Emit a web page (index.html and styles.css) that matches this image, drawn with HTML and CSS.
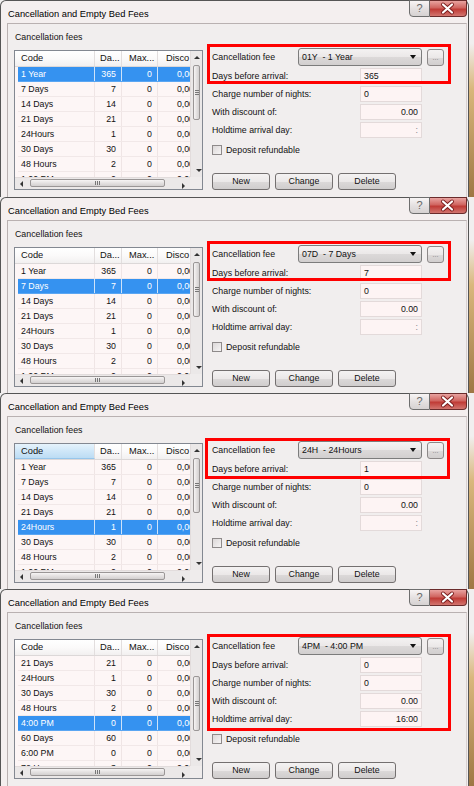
FILE: index.html
```html
<!DOCTYPE html>
<html lang="en">
<head>
  <meta charset="UTF-8">
  <title>Cancellation and Empty Bed Fees</title>
  <link rel="stylesheet" href="styles.css">
</head>
<body>
<div class="shot">

  <!-- 1 Year -->
  <section class="win">
    <div class="frame">
      <div class="titlebar">
        <div class="title">Cancellation and Empty Bed Fees</div>
        <div class="caption">
          <div class="help">?</div>
          <div class="close"><svg width="37" height="17" viewBox="0 0 37 17"><path d="M14 4.5 L23 12.5 M23 4.5 L14 12.5" stroke="#7a1d1d" stroke-width="4" stroke-linecap="round"/><path d="M14 4.5 L23 12.5 M23 4.5 L14 12.5" stroke="#fff" stroke-width="2.2" stroke-linecap="round"/></svg></div>
        </div>
      </div>
      <div class="client">
        <div class="fees">
          <div class="fees-label">Cancellation fees</div>
          <div class="list">
            <div class="view">
              <div class="lv-head"><div>Code</div><div>Da...</div><div>Max...</div><div>Disco</div></div>
              <div class="lv-row sel"><div>1 Year</div><div>365</div><div>0</div><div>0,00</div></div>
              <div class="lv-row"><div>7 Days</div><div>7</div><div>0</div><div>0,00</div></div>
              <div class="lv-row"><div>14 Days</div><div>14</div><div>0</div><div>0,00</div></div>
              <div class="lv-row"><div>21 Days</div><div>21</div><div>0</div><div>0,00</div></div>
              <div class="lv-row"><div>24Hours</div><div>1</div><div>0</div><div>0,00</div></div>
              <div class="lv-row"><div>30 Days</div><div>30</div><div>0</div><div>0,00</div></div>
              <div class="lv-row"><div>48 Hours</div><div>2</div><div>0</div><div>0,00</div></div>
              <div class="lv-row"><div>1:00 PM</div><div>0</div><div>0</div><div>0,00</div></div>
            </div>
            <div class="vs"><div class="sb-btn"><span class="tri up"></span></div><div class="thumb"></div><div class="sb-btn end"><span class="tri down"></span></div></div>
            <div class="hs"><div class="sb-btn"><span class="tri left"></span></div><div class="hthumb"></div><div class="sb-btn end"><span class="tri right"></span></div></div>
            <div class="corner"></div>
          </div>
        </div>
        <div class="form">
          <div class="mark">
            <div class="row combo-row"><label>Cancellation fee</label><div class="combo"><span>01Y  - 1 Year</span><span class="tri down"></span></div><div class="dots">...</div></div>
            <div class="row"><label>Days before arrival:</label><div class="field">365</div></div>
          </div>
          <div class="row"><label>Charge number of nights:</label><div class="field">0</div></div>
          <div class="row"><label>With discount of:</label><div class="field num">0.00</div></div>
          <div class="row"><label>Holdtime arrival day:</label><div class="field num off">:</div></div>
          <div class="check"><span class="box"></span>Deposit refundable</div>
          <div class="buttons"><div class="btn">New</div><div class="btn">Change</div><div class="btn">Delete</div></div>
        </div>
      </div>
    </div>
  </section>

  <!-- 7 Days -->
  <section class="win">
    <div class="frame">
      <div class="titlebar">
        <div class="title">Cancellation and Empty Bed Fees</div>
        <div class="caption">
          <div class="help">?</div>
          <div class="close"><svg width="37" height="17" viewBox="0 0 37 17"><path d="M14 4.5 L23 12.5 M23 4.5 L14 12.5" stroke="#7a1d1d" stroke-width="4" stroke-linecap="round"/><path d="M14 4.5 L23 12.5 M23 4.5 L14 12.5" stroke="#fff" stroke-width="2.2" stroke-linecap="round"/></svg></div>
        </div>
      </div>
      <div class="client">
        <div class="fees">
          <div class="fees-label">Cancellation fees</div>
          <div class="list">
            <div class="view">
              <div class="lv-head"><div>Code</div><div>Da...</div><div>Max...</div><div>Disco</div></div>
              <div class="lv-row"><div>1 Year</div><div>365</div><div>0</div><div>0,00</div></div>
              <div class="lv-row sel"><div>7 Days</div><div>7</div><div>0</div><div>0,00</div></div>
              <div class="lv-row"><div>14 Days</div><div>14</div><div>0</div><div>0,00</div></div>
              <div class="lv-row"><div>21 Days</div><div>21</div><div>0</div><div>0,00</div></div>
              <div class="lv-row"><div>24Hours</div><div>1</div><div>0</div><div>0,00</div></div>
              <div class="lv-row"><div>30 Days</div><div>30</div><div>0</div><div>0,00</div></div>
              <div class="lv-row"><div>48 Hours</div><div>2</div><div>0</div><div>0,00</div></div>
              <div class="lv-row"><div>1:00 PM</div><div>0</div><div>0</div><div>0,00</div></div>
            </div>
            <div class="vs"><div class="sb-btn"><span class="tri up"></span></div><div class="thumb"></div><div class="sb-btn end"><span class="tri down"></span></div></div>
            <div class="hs"><div class="sb-btn"><span class="tri left"></span></div><div class="hthumb"></div><div class="sb-btn end"><span class="tri right"></span></div></div>
            <div class="corner"></div>
          </div>
        </div>
        <div class="form">
          <div class="mark">
            <div class="row combo-row"><label>Cancellation fee</label><div class="combo"><span>07D  - 7 Days</span><span class="tri down"></span></div><div class="dots">...</div></div>
            <div class="row"><label>Days before arrival:</label><div class="field">7</div></div>
          </div>
          <div class="row"><label>Charge number of nights:</label><div class="field">0</div></div>
          <div class="row"><label>With discount of:</label><div class="field num">0.00</div></div>
          <div class="row"><label>Holdtime arrival day:</label><div class="field num off">:</div></div>
          <div class="check"><span class="box"></span>Deposit refundable</div>
          <div class="buttons"><div class="btn">New</div><div class="btn">Change</div><div class="btn">Delete</div></div>
        </div>
      </div>
    </div>
  </section>

  <!-- 24Hours -->
  <section class="win">
    <div class="frame">
      <div class="titlebar">
        <div class="title">Cancellation and Empty Bed Fees</div>
        <div class="caption">
          <div class="help">?</div>
          <div class="close"><svg width="37" height="17" viewBox="0 0 37 17"><path d="M14 4.5 L23 12.5 M23 4.5 L14 12.5" stroke="#7a1d1d" stroke-width="4" stroke-linecap="round"/><path d="M14 4.5 L23 12.5 M23 4.5 L14 12.5" stroke="#fff" stroke-width="2.2" stroke-linecap="round"/></svg></div>
        </div>
      </div>
      <div class="client">
        <div class="fees">
          <div class="fees-label">Cancellation fees</div>
          <div class="list">
            <div class="view">
              <div class="lv-head"><div class="hot">Code</div><div>Da...</div><div>Max...</div><div>Disco</div></div>
              <div class="lv-row"><div>1 Year</div><div>365</div><div>0</div><div>0,00</div></div>
              <div class="lv-row"><div>7 Days</div><div>7</div><div>0</div><div>0,00</div></div>
              <div class="lv-row"><div>14 Days</div><div>14</div><div>0</div><div>0,00</div></div>
              <div class="lv-row"><div>21 Days</div><div>21</div><div>0</div><div>0,00</div></div>
              <div class="lv-row sel"><div>24Hours</div><div>1</div><div>0</div><div>0,00</div></div>
              <div class="lv-row"><div>30 Days</div><div>30</div><div>0</div><div>0,00</div></div>
              <div class="lv-row"><div>48 Hours</div><div>2</div><div>0</div><div>0,00</div></div>
              <div class="lv-row"><div>1:00 PM</div><div>0</div><div>0</div><div>0,00</div></div>
            </div>
            <div class="vs"><div class="sb-btn"><span class="tri up"></span></div><div class="thumb"></div><div class="sb-btn end"><span class="tri down"></span></div></div>
            <div class="hs"><div class="sb-btn"><span class="tri left"></span></div><div class="hthumb"></div><div class="sb-btn end"><span class="tri right"></span></div></div>
            <div class="corner"></div>
          </div>
        </div>
        <div class="form">
          <div class="mark third">
            <div class="row combo-row"><label>Cancellation fee</label><div class="combo"><span>24H  - 24Hours</span><span class="tri down"></span></div><div class="dots">...</div></div>
            <div class="row"><label>Days before arrival:</label><div class="field">1</div></div>
          </div>
          <div class="row"><label>Charge number of nights:</label><div class="field">0</div></div>
          <div class="row"><label>With discount of:</label><div class="field num">0.00</div></div>
          <div class="row"><label>Holdtime arrival day:</label><div class="field num off">:</div></div>
          <div class="check"><span class="box"></span>Deposit refundable</div>
          <div class="buttons"><div class="btn">New</div><div class="btn">Change</div><div class="btn">Delete</div></div>
        </div>
      </div>
    </div>
  </section>

  <!-- 4:00 PM -->
  <section class="win">
    <div class="frame">
      <div class="titlebar">
        <div class="title">Cancellation and Empty Bed Fees</div>
        <div class="caption">
          <div class="help">?</div>
          <div class="close"><svg width="37" height="17" viewBox="0 0 37 17"><path d="M14 4.5 L23 12.5 M23 4.5 L14 12.5" stroke="#7a1d1d" stroke-width="4" stroke-linecap="round"/><path d="M14 4.5 L23 12.5 M23 4.5 L14 12.5" stroke="#fff" stroke-width="2.2" stroke-linecap="round"/></svg></div>
        </div>
      </div>
      <div class="client">
        <div class="fees">
          <div class="fees-label">Cancellation fees</div>
          <div class="list">
            <div class="view">
              <div class="lv-head"><div>Code</div><div>Da...</div><div>Max...</div><div>Disco</div></div>
              <div class="lv-row"><div>21 Days</div><div>21</div><div>0</div><div>0,00</div></div>
              <div class="lv-row"><div>24Hours</div><div>1</div><div>0</div><div>0,00</div></div>
              <div class="lv-row"><div>30 Days</div><div>30</div><div>0</div><div>0,00</div></div>
              <div class="lv-row"><div>48 Hours</div><div>2</div><div>0</div><div>0,00</div></div>
              <div class="lv-row sel"><div>4:00 PM</div><div>0</div><div>0</div><div>0,00</div></div>
              <div class="lv-row"><div>60 Days</div><div>60</div><div>0</div><div>0,00</div></div>
              <div class="lv-row"><div>6:00 PM</div><div>0</div><div>0</div><div>0,00</div></div>
              <div class="lv-row"><div>72 Hours</div><div>3</div><div>0</div><div>0,00</div></div>
            </div>
            <div class="vs"><div class="sb-btn"><span class="tri up"></span></div><div class="thumb low"></div><div class="sb-btn end"><span class="tri down"></span></div></div>
            <div class="hs"><div class="sb-btn"><span class="tri left"></span></div><div class="hthumb"></div><div class="sb-btn end"><span class="tri right"></span></div></div>
            <div class="corner"></div>
          </div>
        </div>
        <div class="form">
          <div class="mark tall">
            <div class="row combo-row"><label>Cancellation fee</label><div class="combo"><span>4PM  - 4:00 PM</span><span class="tri down"></span></div><div class="dots">...</div></div>
            <div class="row"><label>Days before arrival:</label><div class="field">0</div></div>
            <div class="row"><label>Charge number of nights:</label><div class="field">0</div></div>
            <div class="row"><label>With discount of:</label><div class="field num">0.00</div></div>
            <div class="row"><label>Holdtime arrival day:</label><div class="field num">16:00</div></div>
          </div>
          <div class="check"><span class="box"></span>Deposit refundable</div>
          <div class="buttons"><div class="btn">New</div><div class="btn">Change</div><div class="btn">Delete</div></div>
        </div>
      </div>
    </div>
  </section>

</div>
</body>
</html>
```

FILE: styles.css
```css
* {
  box-sizing: border-box;
}
body {
  margin: 0;
  font-family: "Liberation Sans", Arial, sans-serif;
  font-size: 8.8px;
  color: #111;
  background: #fff;
}
.shot {
  width: 474px;
  height: 786px;
  overflow: hidden;
}
.win {
  height: 196px;
  display: flex;
  background: linear-gradient(#f1efef 0, #f1efef 22%, #d9b77c 45%, #9e7744 100%);
}
.win:first-child, .win:last-child {
  height: 197px;
}
.frame {
  width: 469px;
  display: flex;
  flex-direction: column;
  background: #f4efef;
  border: 1px solid #555;
  border-bottom: none;
  border-radius: 6px 6px 0 0;
  padding: 0 1px 0 6px;
}
.titlebar {
  height: 22px;
  display: flex;
  justify-content: space-between;
  align-items: flex-start;
}
.title {
  margin: 7px 0 0 1px;
  line-height: 12px;
  font-size: 9.3px;
  color: #000;
}
.caption {
  display: flex;
  margin-top: -1px;
}
.help {
  width: 21px;
  height: 17px;
  border: 1px solid #6e6e6e;
  border-radius: 0 0 0 4px;
  background: linear-gradient(#f8f5f5, #e3dfdf 55%, #d6d2d2);
  color: #666;
  font-size: 11px;
  line-height: 15px;
  text-align: center;
}
.close {
  width: 37px;
  height: 17px;
  border: 1px solid #6a2b2b;
  border-left: none;
  border-radius: 0 0 4px 0;
  background: linear-gradient(#e9a3a0, #d06560 45%, #c03b36 55%, #d2756f);
}
.close svg {
  display: block;
  margin: -1px 0 0 -1px;
}
.client {
  flex: 1;
  display: flex;
  background: #f1eeee;
  border-top: 1px solid #b9b1b1;
  border-left: 1px solid #b9b1b1;
  border-right: 1px solid #d8d0d0;
}
.fees {
  width: 189px;
  margin-left: 6px;
  padding-top: 7px;
}
.fees-label {
  margin: 0 0 7px 1px;
  line-height: 12px;
}
.list {
  width: 189px;
  height: 140px;
  border: 1px solid #838891;
  background: #fdf6f6;
  display: grid;
  grid-template-columns: 175px 12px;
  grid-template-rows: 126px 12px;
}
.view {
  overflow: hidden;
  white-space: nowrap;
}
.lv-head {
  display: grid;
  grid-template-columns: 80px 27px 36px 42px;
  height: 16px;
  background: linear-gradient(#fff, #fbfafa 50%, #f2f0f0);
  border-bottom: 1px solid #dcd8d8;
  font-size: 9.3px;
  line-height: 15px;
}
.lv-head div {
  padding-left: 5px;
  border-right: 1px solid #e2dede;
  overflow: hidden;
}
.lv-head div:nth-child(1) {
  padding-left: 6px;
}
.lv-head div:nth-child(3) {
  padding-left: 7px;
}
.lv-head div:nth-child(4) {
  padding-left: 8px;
}
.lv-head .hot {
  background: linear-gradient(#e6f3fc, #cfe7f8 50%, #bcdcf4);
  border-bottom: 1px solid #97c6eb;
}
.lv-row {
  display: grid;
  grid-template-columns: 77px 27px 36px 42px;
  margin-left: 3px;
  height: 15px;
  line-height: 14px;
  border-bottom: 1px solid #f1e8e8;
}
.lv-row div {
  padding-right: 5px;
  text-align: right;
  border-right: 1px solid #efe5e5;
}
.lv-row div:first-child {
  padding: 0 0 0 3px;
  text-align: left;
}
.lv-row.sel {
  background: #3592f0;
  color: #fff;
  border-bottom-color: #5aa6f2;
}
.lv-row.sel div {
  border-right-color: #cfe3f9;
}
.vs {
  display: flex;
  flex-direction: column;
  background: #ebe8e8;
  border-left: 1px solid #e2dcdc;
}
.hs {
  display: flex;
  background: #ebe8e8;
  border-top: 1px solid #e2dcdc;
}
.corner {
  background: #efecec;
}
.sb-btn {
  height: 13px;
  width: 13px;
  display: flex;
  align-items: center;
  justify-content: center;
  flex: none;
}
.vs .sb-btn {
  width: auto;
}
.sb-btn.end {
  margin-top: auto;
  margin-left: auto;
}
.hs .sb-btn {
  height: auto;
}
.tri {
  width: 0;
  height: 0;
  border: 3px solid transparent;
}
.tri.up {
  border-bottom: 3px solid #333;
  border-top-width: 0;
}
.tri.down {
  border-top: 3px solid #333;
  border-bottom-width: 0;
}
.tri.left {
  border-right: 3px solid #333;
  border-left-width: 0;
}
.tri.right {
  border-left: 3px solid #333;
  border-right-width: 0;
}
.thumb {
  height: 55px;
  margin: 1px 2px 0;
  border: 1px solid #9a9696;
  border-radius: 2px;
  background:
    linear-gradient(#777, #777) center calc(50% - 2px) / 4px 1px no-repeat,
    linear-gradient(#777, #777) center 50% / 4px 1px no-repeat,
    linear-gradient(#777, #777) center calc(50% + 2px) / 4px 1px no-repeat,
    linear-gradient(to right, #f6f4f4, #e4e1e1 50%, #d3d0d0);
}
.thumb.low {
  margin-top: 23px;
}
.hthumb {
  width: 135px;
  margin: 1px 0 2px 2px;
  border: 1px solid #9a9696;
  border-radius: 2px;
  background:
    linear-gradient(to right, #777 1px, transparent 1px, transparent 2px, #777 2px, #777 3px, transparent 3px, transparent 4px, #777 4px, #777 5px, transparent 5px) center / 5px 4px no-repeat,
    linear-gradient(#f6f4f4, #e4e1e1 50%, #d3d0d0);
}
.form {
  width: 232px;
  margin-left: 9px;
  padding-top: 24px;
  display: flex;
  flex-direction: column;
  gap: 2px;
}
.mark {
  position: relative;
  display: flex;
  flex-direction: column;
  gap: 2px;
}
.mark::after {
  content: "";
  position: absolute;
  top: -4px;
  left: -5px;
  right: -7px;
  bottom: 0;
  border: 3px solid #f00;
}
.mark.third::after {
  top: -3px;
  left: -7px;
  right: -6px;
  bottom: -2px;
}
.mark.tall::after {
  top: -3px;
  bottom: -4px;
}
.row {
  display: flex;
  align-items: center;
  height: 16px;
}
.row label {
  flex: none;
  width: 148px;
}
.combo-row {
  height: 18px;
}
.combo-row label {
  width: 86px;
}
.field {
  width: 62px;
  height: 16px;
  padding: 0 3px;
  line-height: 15px;
  background: #fdf4f4;
  border: 1px solid #e3dada;
}
.field.num {
  text-align: right;
}
.field.off {
  color: #888;
}
.combo {
  width: 124px;
  height: 18px;
  display: flex;
  align-items: center;
  justify-content: space-between;
  padding: 0 5px 0 3px;
  white-space: pre;
  border: 1px solid #7c7c7c;
  border-radius: 3px;
  background: linear-gradient(#f4f2f2, #ebe8e8 50%, #dcd9d9 51%, #d2cfcf);
}
.combo .tri {
  border-width: 4px 3.5px 0;
  border-top-color: #111;
}
.dots {
  width: 17px;
  height: 17px;
  margin-left: 5px;
  border: 1px solid #8c8888;
  border-radius: 3px;
  background: linear-gradient(#f4f2f2, #ebe8e8 50%, #dcd9d9 51%, #d2cfcf);
  color: #777;
  font-size: 7px;
  line-height: 16px;
  text-align: center;
}
.check {
  display: flex;
  align-items: center;
  gap: 4px;
  height: 10px;
  margin-top: 5px;
}
.box {
  width: 10px;
  height: 10px;
  border: 1px solid #8e8a8a;
  background: linear-gradient(135deg, #dcd8d8, #f6f4f4);
}
.buttons {
  display: flex;
  gap: 5px;
  margin-top: 16px;
}
.btn {
  width: 58px;
  height: 17px;
  border: 1px solid #747070;
  border-radius: 3px;
  background: linear-gradient(#f4f2f2, #ebe8e8 50%, #dcd9d9 51%, #d0cdcd);
  line-height: 15px;
  text-align: center;
}
```
